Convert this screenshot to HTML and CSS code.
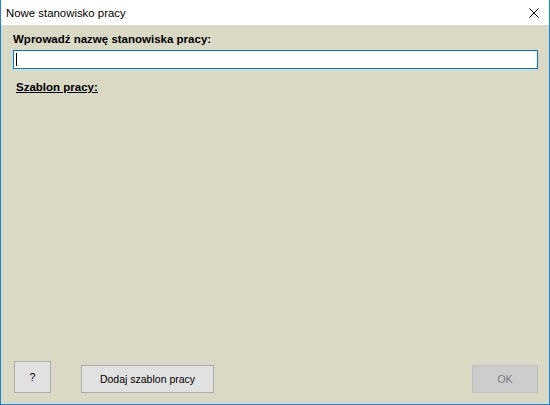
FILE: index.html
```html
<!DOCTYPE html>
<html lang="pl">
<head>
    <meta charset="UTF-8">
    <title>Nowe stanowisko pracy</title>
    <link rel="stylesheet" href="styles.css">
</head>
<body>
<div class="window">
    <div class="title-bar">
        <span class="title">Nowe stanowisko pracy</span>
        <svg class="close" width="10" height="10" viewBox="0 0 10 10">
            <path d="M0.5 0.5 L9.5 9.5 M9.5 0.5 L0.5 9.5" stroke="#000" stroke-width="1"/>
        </svg>
    </div>
    <div class="client">
        <label class="field-label" for="name">Wprowadź nazwę stanowiska pracy:</label>
        <div class="text-box" id="name"><span class="caret"></span></div>
        <div class="section-label">Szablon pracy:</div>
        <div class="spacer"></div>
        <div class="buttons">
            <button class="btn btn-help">?</button>
            <button class="btn btn-add">Dodaj szablon pracy</button>
            <button class="btn btn-ok" disabled>OK</button>
        </div>
    </div>
</div>
</body>
</html>
```
FILE: styles.css
```css
html, body {
    margin: 0;
    padding: 0;
}
body {
    width: 550px;
    height: 405px;
    font-family: "Liberation Sans", Arial, sans-serif;
}
.window {
    box-sizing: border-box;
    width: 550px;
    height: 405px;
    border: 1px solid #1883d7;
    border-top: none;
    display: flex;
    flex-direction: column;
    background: #d9d9c5;
}
.title-bar {
    height: 25px;
    background: #fff;
    display: flex;
    align-items: center;
    padding: 0 10px 0 5px;
    justify-content: space-between;
}
.title {
    font-size: 11.4px;
    color: #000;
}
.close {
    display: block;
}
.client {
    flex: 1;
    display: flex;
    flex-direction: column;
    padding: 8px 11px 11px 12px;
}
.field-label {
    font-weight: bold;
    font-size: 11.5px;
    color: #000;
    line-height: 13px;
    margin-bottom: 4px;
}
.text-box {
    height: 15px;
    border: 1px solid #0078d7;
    background: #fff;
    padding: 1px 2px;
    display: flex;
    align-items: center;
}
.caret {
    width: 1px;
    height: 13px;
    background: #000;
}
.section-label {
    margin-top: 12px;
    margin-left: 3px;
    font-weight: bold;
    font-size: 11.5px;
    line-height: 13px;
    text-decoration: underline;
    color: #000;
}
.spacer {
    flex: 1;
}
.buttons {
    display: flex;
    align-items: flex-end;
}
.btn {
    font-family: "Liberation Sans", Arial, sans-serif;
    font-size: 10.5px;
    background: #e1e1e1;
    border: 1px solid #adadad;
    color: #000;
    padding: 0;
    height: 28px;
    box-sizing: border-box;
}
.btn-help {
    width: 37px;
    height: 32px;
    margin-left: 1px;
}
.btn-add {
    width: 133px;
    margin-left: 30px;
}
.btn-ok {
    width: 66px;
    margin-left: auto;
    background: #cccccc;
    border-color: #bfbfbf;
    color: #7a7a7a;
}
```
